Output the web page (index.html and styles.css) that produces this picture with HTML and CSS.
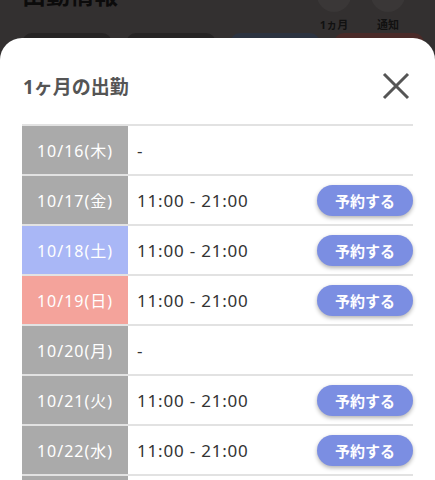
FILE: index.html
```html
<!DOCTYPE html>
<html lang="ja">
<head>
    <meta charset="UTF-8">
    <meta name="viewport" content="width=device-width, initial-scale=1.0">
    <title>1ヶ月の出勤</title>
    <link rel="stylesheet" href="styles.css">
</head>
<body>

<div class="page">
    <div class="page-head">
        <h1>出勤情報</h1>
        <div class="head-icons">
            <div class="head-icon"><span class="dot"></span>1ヵ月</div>
            <div class="head-icon"><span class="dot"></span>通知</div>
        </div>
    </div>
    <div class="page-cards">
        <div class="card"></div>
        <div class="card"></div>
        <div class="card card-blue"></div>
        <div class="card card-red"></div>
    </div>
</div>

<div class="sheet">
    <div class="sheet-head">
        <h2>1ヶ月の出勤</h2>
        <svg class="close" width="28" height="28" viewBox="0 0 28 28">
            <path d="M2 2 L26 26 M26 2 L2 26" stroke="#555" stroke-width="3" fill="none"/>
        </svg>
    </div>

    <div class="schedule">
        <div class="row">
            <div class="date">10/16(木)</div>
            <div class="time">-</div>
        </div>
        <div class="row">
            <div class="date">10/17(金)</div>
            <div class="time">11:00 - 21:00</div>
            <button class="reserve">予約する</button>
        </div>
        <div class="row">
            <div class="date sat">10/18(土)</div>
            <div class="time">11:00 - 21:00</div>
            <button class="reserve">予約する</button>
        </div>
        <div class="row">
            <div class="date sun">10/19(日)</div>
            <div class="time">11:00 - 21:00</div>
            <button class="reserve">予約する</button>
        </div>
        <div class="row">
            <div class="date">10/20(月)</div>
            <div class="time">-</div>
        </div>
        <div class="row">
            <div class="date">10/21(火)</div>
            <div class="time">11:00 - 21:00</div>
            <button class="reserve">予約する</button>
        </div>
        <div class="row">
            <div class="date">10/22(水)</div>
            <div class="time">11:00 - 21:00</div>
            <button class="reserve">予約する</button>
        </div>
        <div class="row">
            <div class="date">10/23(木)</div>
            <div class="time">11:00 - 21:00</div>
            <button class="reserve">予約する</button>
        </div>
    </div>
</div>

</body>
</html>
```

FILE: styles.css
```css
body {
    margin: 0;
    height: 480px;
    overflow: hidden;
    background: #333030;
    font-family: "Noto Sans", "Noto Sans CJK JP", sans-serif;
    position: relative;
}
.page {
    padding: 0 22px;
}
.page-head {
    display: flex;
    justify-content: space-between;
    height: 33px;
}
.page-head h1 {
    margin: -24px 0 0;
    font-size: 24px;
    color: #0c0b0b;
}
.head-icons {
    display: flex;
    gap: 20px;
    margin-top: -22px;
    margin-right: 8px;
}
.head-icon {
    display: flex;
    flex-direction: column;
    align-items: center;
    font-size: 11px;
    color: #111;
    font-weight: bold;
}
.head-icon .dot {
    width: 34px;
    height: 34px;
    border-radius: 50%;
    background: #3a3737;
    margin-bottom: 4px;
}
.page-cards {
    display: flex;
    gap: 14px;
}
.card {
    width: 90px;
    height: 20px;
    border-radius: 10px;
    background: #262424;
}
.card-blue {
    background: #2c3340;
}
.card-red {
    background: #4a2a28;
    margin-right: -60px;
}

.sheet {
    position: absolute;
    top: 38px;
    left: 0;
    right: 0;
    bottom: 0;
    background: #fff;
    border-radius: 22px 22px 0 0;
    padding: 0 22px;
}
.sheet-head {
    display: flex;
    justify-content: space-between;
    align-items: center;
    height: 76px;
    padding-top: 10px;
}
.sheet-head h2 {
    margin: 0 0 0 1px;
    font-size: 19px;
    color: #555;
    font-weight: bold;
}
.close {
    margin-right: 3px;
}
.schedule {
    border-top: 2px solid #e2e2e2;
}
.row {
    display: flex;
    align-items: center;
    height: 48px;
    border-bottom: 2px solid #e2e2e2;
}
.date {
    width: 106px;
    height: 100%;
    background: #aaa;
    color: #fff;
    font-size: 16px;
    letter-spacing: 1px;
    display: flex;
    align-items: center;
    justify-content: center;
}
.date.sat {
    background: #a9b7f6;
}
.date.sun {
    background: #f4a39b;
}
.time {
    flex: 1;
    padding-left: 9px;
    font-size: 17px;
    letter-spacing: 0.8px;
    color: #333;
}
.reserve {
    width: 96px;
    height: 31px;
    border: none;
    border-radius: 16px;
    background: #7b8ee2;
    color: #fff;
    font-family: inherit;
    font-size: 15px;
    font-weight: bold;
    box-shadow: 0 2px 4px rgba(0, 0, 0, 0.3);
    cursor: pointer;
}
```
